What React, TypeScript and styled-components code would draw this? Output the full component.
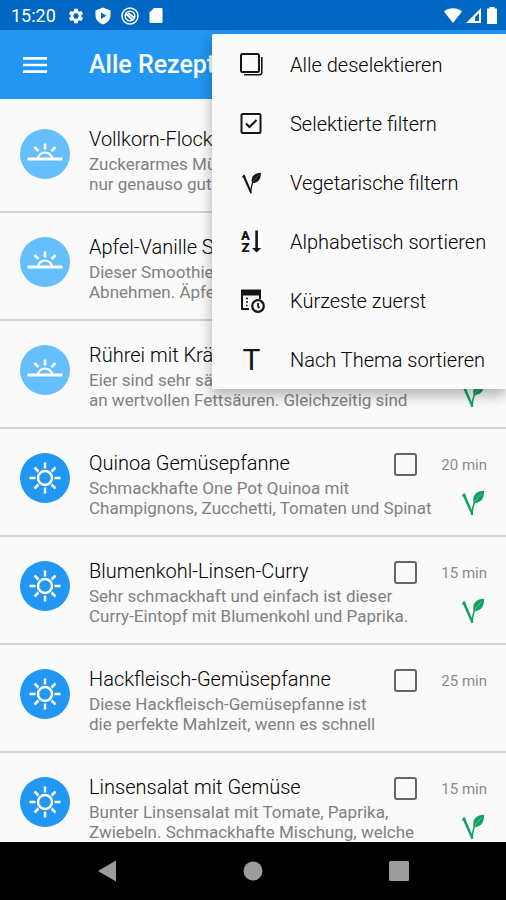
import React from "react";
import styled, { createGlobalStyle } from "styled-components";
import { MdMenu, MdSettings } from "react-icons/md";

const GlobalStyle = createGlobalStyle`
  * { box-sizing: border-box; }
  body {
    margin: 0;
    background: #fafafa;
    font-family: Roboto, "Liberation Sans", sans-serif;
  }
  button { font: inherit; }
`;

const Screen = styled.div`
  position: relative;
  display: flex;
  flex-direction: column;
  height: 100vh;
  overflow: hidden;
`;

const StatusBar = styled.div`
  flex: none;
  display: flex;
  align-items: center;
  justify-content: space-between;
  height: 30px;
  padding: 1px 6px 0 11px;
  background: #0068c2;
  color: #fff;
`;

const StatusGroup = styled.div<{ $gap: number }>`
  display: flex;
  align-items: center;
  gap: ${(p) => p.$gap}px;

  svg { display: block; }
`;

const Clock = styled.span`
  margin-right: 1px;
  font-size: 18px;
  line-height: 26px;
`;

const AppBar = styled.header`
  flex: none;
  display: flex;
  align-items: center;
  height: 69px;
  padding: 1px 20px 0 19px;
  background: #2196f3;
  color: #fff;
`;

const MenuButton = styled.button`
  display: flex;
  width: 70px;
  padding: 0;
  border: 0;
  background: none;
  color: inherit;
`;

const AppTitle = styled.h1`
  margin: 0;
  font-size: 25px;
  font-weight: 500;
  line-height: 32px;
`;

const List = styled.ul`
  flex: 1;
  min-height: 0;
  margin: 0;
  padding: 6px 0 0;
  overflow: hidden;
  list-style: none;
`;

const Row = styled.li`
  display: flex;
  height: 108px;
  padding: 21px 19px 0 20px;
  border-bottom: 2px solid #d2d2d2;
`;

const Avatar = styled.div<{ $tone: string }>`
  flex: none;
  display: flex;
  align-items: center;
  justify-content: center;
  width: 50px;
  height: 50px;
  margin: 3px 19px 0 0;
  border-radius: 50%;
  background: ${(p) => p.$tone};
`;

const Body = styled.div`
  flex: 1;
  min-width: 0;
`;

const TitleLine = styled.div`
  display: flex;
  align-items: center;
  height: 26px;
`;

const RowTitle = styled.label`
  flex: 1;
  color: #000;
  font-size: 20px;
  font-weight: 300;
  line-height: 26px;
  white-space: nowrap;
`;

const Check = styled.input`
  appearance: none;
  flex: none;
  width: 23px;
  height: 23px;
  margin: 3px 0 0;
  border: 2px solid #666;
  border-radius: 3px;
`;

const Duration = styled.span`
  width: 70px;
  margin-top: 3px;
  color: #8a8a8a;
  font-size: 15px;
  line-height: 20px;
  text-align: right;
`;

const DetailLine = styled.div`
  display: flex;
  justify-content: space-between;
`;

const Description = styled.p`
  margin: 2px 0 0;
  color: #808080;
  font-size: 17px;
  line-height: 20px;
  white-space: pre;
`;

const Leaf = styled.svg`
  flex: none;
  width: 24px;
  height: 26px;
  margin: 14px 2px 0 0;
`;

const Menu = styled.div`
  position: absolute;
  top: 34px;
  right: 0;
  width: 294px;
  padding-top: 1px;
  border-radius: 2px 0 0 2px;
  background: #fafafa;
  box-shadow: 0 6px 14px rgba(0, 0, 0, 0.3);
`;

const MenuItem = styled.button`
  display: flex;
  align-items: center;
  width: 100%;
  height: 59px;
  padding: 0 0 0 27px;
  border: 0;
  background: none;
  color: #000;
  font-size: 20px;
  font-weight: 300;
  line-height: 24px;
  text-align: left;
  white-space: nowrap;
`;

const MenuIcon = styled.span`
  display: flex;
  width: 51px;
  color: #151515;
`;

const LetterIcon = styled.span`
  width: 25px;
  font-size: 30px;
  font-weight: 400;
  line-height: 30px;
  text-align: center;
`;

const NavBar = styled.nav`
  flex: none;
  display: grid;
  grid-template-columns: repeat(3, 146px);
  justify-content: center;
  height: 58px;
  background: #000;
`;

const NavButton = styled.button`
  display: flex;
  align-items: center;
  justify-content: center;
  padding: 0;
  border: 0;
  background: none;
  color: #9c9c9c;
`;

function VeggieMark({ color, vein }: { color: string; vein: string }) {
  return (
    <Leaf viewBox="0 0 24 26" aria-hidden="true">
      <path d="M1.5 5 3.8 3.5 11 20.5 12.3 25 10.5 25Z" fill={color} />
      <path d="M.5 6.5 3 2.8 5 5.8Z" fill={color} />
      <path d="M11 25C11.4 18 12.4 12 16.4 8" stroke={color} strokeWidth="1.6" fill="none" />
      <path d="M12.6 13C10.8 6 14.6 1.2 23 .8 23.4 8.6 19.6 13.6 12.6 13Z" fill={color} />
      <path d="M13.4 12 20.4 3.6" stroke={vein} strokeWidth="0.8" />
    </Leaf>
  );
}

const MenuLeaf = styled.span`
  display: flex;
  width: 25px;
  justify-content: center;

  svg { width: 21px; height: 22px; margin: 0; }
`;

function Sunrise() {
  return (
    <svg width="36" height="30" viewBox="0 0 36 30" fill="none" stroke="#fff" strokeWidth="2.2">
      <path d="M0.5 20H35.5" strokeWidth="3" />
      <path d="M11 20a7 6.5 0 0 1 14 0" />
      <path d="M18 4.5V10.5M7.5 8 11.5 12M28.5 8 24.5 12" strokeWidth="2.6" />
    </svg>
  );
}

function Sun() {
  return (
    <svg width="32" height="32" viewBox="0 0 32 32" fill="none" stroke="#fff" strokeWidth="2.5">
      <circle cx="16" cy="16" r="7" />
      <path d="M16 .5V6.500M16 25.500V31.500M.5 16H6.500M25.500 16H31.500M5.500 5.500 9.500 9.500M22.500 22.500 26.500 26.500M26.500 5.500 22.500 9.500M9.500 22.500 5.500 26.500" />
    </svg>
  );
}

type Recipe = {
  title: string;
  text: string;
  minutes: number;
  morning?: boolean;
  veggie?: boolean;
};

const recipes: Recipe[] = [
  { title: "Vollkorn-Flocken", text: "Zuckerarmes Müsli\nnur genauso gut", minutes: 10, morning: true, veggie: true },
  { title: "Apfel-Vanille Smoothie", text: "Dieser Smoothie\nAbnehmen. Äpfel", minutes: 10, morning: true, veggie: true },
  { title: "Rührei mit Kräutern", text: "Eier sind sehr sättigend\nan wertvollen Fettsäuren. Gleichzeitig sind", minutes: 10, morning: true, veggie: true },
  { title: "Quinoa Gemüsepfanne", text: "Schmackhafte One Pot Quinoa mit\nChampignons, Zucchetti, Tomaten und Spinat", minutes: 20, veggie: true },
  { title: "Blumenkohl-Linsen-Curry", text: "Sehr schmackhaft und einfach ist dieser\nCurry-Eintopf mit Blumenkohl und Paprika.", minutes: 15, veggie: true },
  { title: "Hackfleisch-Gemüsepfanne", text: "Diese Hackfleisch-Gemüsepfanne ist\ndie perfekte Mahlzeit, wenn es schnell", minutes: 25 },
  { title: "Linsensalat mit Gemüse", text: "Bunter Linsensalat mit Tomate, Paprika,\nZwiebeln. Schmackhafte Mischung, welche", minutes: 15, veggie: true },
];

const menuItems = [
  {
    label: "Alle deselektieren",
    icon: (
      <svg width="25" height="25" viewBox="0 0 25 25" fill="none" stroke="currentColor">
        <rect x="2" y="2" width="18" height="18" rx="1.5" strokeWidth="2" />
        <path d="M22.8 5V20.5a2.3 2.3 0 0 1-2.3 2.3H5" strokeWidth="1.6" />
      </svg>
    ),
  },
  {
    label: "Selektierte filtern",
    icon: (
      <svg width="25" height="25" viewBox="0 0 25 25" fill="none" stroke="currentColor" strokeWidth="2">
        <rect x="2.5" y="3" width="19" height="19" rx="1" />
        <path d="M7 12.5 10.5 16 17.5 9" />
      </svg>
    ),
  },
  {
    label: "Vegetarische filtern",
    icon: (
      <MenuLeaf>
        <VeggieMark color="#151515" vein="#777" />
      </MenuLeaf>
    ),
  },
  {
    label: "Alphabetisch sortieren",
    icon: (
      <svg width="25" height="25" viewBox="0 0 25 25" fill="currentColor">
        <text x="6.5" y="11" fontSize="13" fontWeight="900" textAnchor="middle">A</text>
        <text x="6.5" y="23" fontSize="13" fontWeight="900" textAnchor="middle">Z</text>
        <path d="M16.3 1.5h2.6v17.5h3.3l-4.6 4.5L13 19h3.3z" />
      </svg>
    ),
  },
  {
    label: "Kürzeste zuerst",
    icon: (
      <svg width="28" height="25" viewBox="0 0 28 25" fill="none" stroke="currentColor" strokeWidth="2">
        <path d="M2 1.5H22V7.500H2Z" fill="currentColor" stroke="none" />
        <path d="M10 21H3V3M21 6V11" />
        <path d="M7 10.5h2M7 14h2M7 17.5h1.5" strokeWidth="1.5" />
        <circle cx="19" cy="18" r="5.8" strokeWidth="2.2" />
        <path d="M19 15V18.500L20.500 20" strokeWidth="1.8" />
      </svg>
    ),
  },
  { label: "Nach Thema sortieren", icon: <LetterIcon aria-hidden="true">T</LetterIcon> },
];

export default function App() {
  return (
    <Screen>
      <GlobalStyle />
      <StatusBar>
        <StatusGroup $gap={10}>
          <Clock>15:20</Clock>
          <MdSettings size={18} />
          <svg width="16" height="18" viewBox="0 0 16 18">
            <path d="M8 .5 15.5 3.5V8c0 4.6-3.1 8-7.5 9.5C3.6 16 .5 12.6.5 8V3.5Z" fill="#fff" />
            <path d="M6 5.5 11.5 8.8 6 12Z" fill="#0068c2" />
          </svg>
          <svg width="18" height="18" viewBox="0 0 18 18" fill="none" stroke="#fff" strokeWidth="1.5">
            <circle cx="9" cy="9" r="8" />
            <circle cx="9" cy="9" r="4.8" />
            <path d="M4.5 6.5 12 13M7 6 13 10.5" strokeWidth="1.8" />
          </svg>
          <svg width="14" height="17" viewBox="0 0 14 17">
            <path d="M5 1h7.5a1 1 0 0 1 1 1v13a1 1 0 0 1-1 1h-11a1 1 0 0 1-1-1V5.5Z" fill="#fff" />
          </svg>
        </StatusGroup>
        <StatusGroup $gap={2}>
          <svg width="20" height="17" viewBox="0 0 20 17">
            <path d="M1 4.5C6 .2 14 .2 19 4.5L10 16Z" fill="#fff" />
          </svg>
          <svg width="17" height="17" viewBox="0 0 17 17">
            <path d="M1 16 16 1V16ZM10 14H14V6L10 10Z" fill="#fff" fillRule="evenodd" />
          </svg>
          <svg width="16" height="17" viewBox="0 0 16 17">
            <path d="M5.5 0h5v1.5H13V17H3V1.5h2.5Z" fill="#fff" />
          </svg>
        </StatusGroup>
      </StatusBar>
      <AppBar>
        <MenuButton aria-label="Navigation öffnen">
          <MdMenu size={32} />
        </MenuButton>
        <AppTitle>Alle Rezepte</AppTitle>
      </AppBar>
      <List>
        {recipes.map((r, i) => (
          <Row key={r.title}>
            <Avatar $tone={r.morning ? "#64bffc" : "#2196f3"}>{r.morning ? <Sunrise /> : <Sun />}</Avatar>
            <Body>
              <TitleLine>
                <RowTitle htmlFor={`recipe-${i}`}>{r.title}</RowTitle>
                <Check type="checkbox" id={`recipe-${i}`} />
                <Duration>{r.minutes} min</Duration>
              </TitleLine>
              <DetailLine>
                <Description>{r.text}</Description>
                {r.veggie && <VeggieMark color="#11a25f" vein="#5fd08f" />}
              </DetailLine>
            </Body>
          </Row>
        ))}
      </List>
      <NavBar>
        <NavButton aria-label="Zurück">
          <svg width="20" height="22" viewBox="0 0 20 22"><path d="M1 11 19 .5V21.5Z" fill="currentColor" /></svg>
        </NavButton>
        <NavButton aria-label="Startseite">
          <svg width="20" height="20" viewBox="0 0 20 20"><circle cx="10" cy="10" r="9.5" fill="currentColor" /></svg>
        </NavButton>
        <NavButton aria-label="Übersicht">
          <svg width="20" height="20" viewBox="0 0 20 20"><rect width="20" height="20" rx="1.5" fill="currentColor" /></svg>
        </NavButton>
      </NavBar>
      <Menu role="menu">
        {menuItems.map((m) => (
          <MenuItem key={m.label} role="menuitem">
            <MenuIcon>{m.icon}</MenuIcon>
            {m.label}
          </MenuItem>
        ))}
      </Menu>
    </Screen>
  );
}
